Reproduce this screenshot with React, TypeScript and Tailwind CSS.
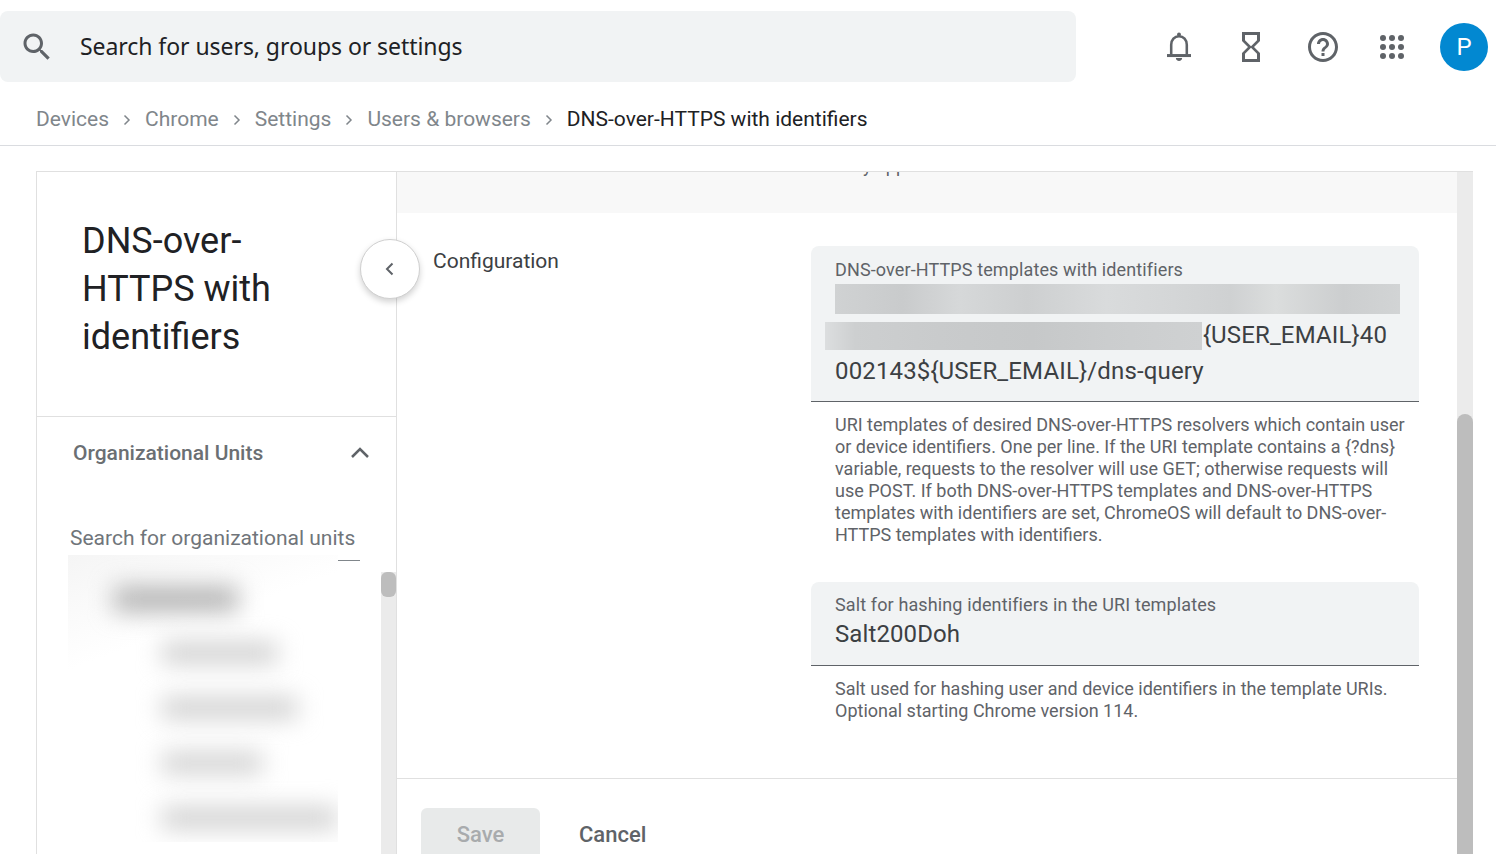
import React from 'react';

const ICON = '#5f6368';

function MatIcon({ d, size = 36 }: { d: string; size?: number }) {
  return (
    <svg width={size} height={size} viewBox="0 0 24 24" fill={ICON}>
      <path d={d} />
    </svg>
  );
}

function Crumb({ label }: { label: string }) {
  return (
    <>
      <span className="text-[#80868b]">{label}</span>
      <svg width="24" height="24" viewBox="0 0 24 24" fill="none" stroke="#80868b" strokeWidth="1.5" className="mx-[6px]">
        <path d="M9.5 7.5l4.5 4.5-4.5 4.5" />
      </svg>
    </>
  );
}

function BlurLine({ width, tone }: { width: string; tone: string }) {
  return <div className={`h-[20px] blur-[12px] ${width} ${tone}`} />;
}

export default function App() {
  return (
    <div className="h-[854px] overflow-hidden bg-white font-['Roboto',sans-serif] text-[#3c4043]">
      {/* Top bar */}
      <header className="flex h-[82px] items-start">
        <div className="mt-[11px] flex h-[71px] w-[1076px] items-center rounded-lg bg-[#f1f3f4] pl-[19px]">
          <MatIcon d="M15.5 14h-.79l-.28-.27C15.41 12.59 16 11.11 16 9.5 16 5.91 13.09 3 9.5 3S3 5.91 3 9.5 5.91 16 9.5 16c1.61 0 3.09-.59 4.23-1.57l.27.28v.79l5 4.99L20.49 19l-4.99-5zm-6 0C7.01 14 5 11.99 5 9.5S7.01 5 9.5 5 14 7.01 14 9.5 11.99 14 9.5 14z" />
          <span className="ml-[25px] font-['Noto_Sans',sans-serif] text-[23px] tracking-[-0.06px] text-[#202124]">Search for users, groups or settings</span>
        </div>
        <div className="ml-[67px] mt-[11px] flex h-[71px] items-center">
          <div className="flex w-[72px] justify-center">
            <svg width="36" height="36" viewBox="0 0 24 24" fill={ICON}>
              <circle cx="12" cy="3.600" r="1.300" />
              <path d="M6.800 17v-6.500c0-3.300 2.200-5.700 5.200-5.700s5.200 2.400 5.200 5.700V17" fill="none" stroke={ICON} strokeWidth="1.700" />
              <rect x="4" y="16.700" width="16" height="2" />
              <path d="M9.900 19.400h4.200c0 1.200-.9 1.900-2.100 1.900s-2.100-.7-2.100-1.900z" />
            </svg>
          </div>
          <div className="flex w-[72px] justify-center">
            <MatIcon d="M6 2v6h.01L6 8.01 10 12l-4 4 .01.01H6V22h12v-5.99h-.01L18 16l-4-4 4-3.99-.01-.01H18V2H6zm10 14.500V20H8v-3.500l4-4 4 4zm-4-5l-4-4V4h8v3.500l-4 4z" />
          </div>
          <div className="flex w-[72px] justify-center">
            <MatIcon d="M11 18h2v-2h-2v2zm1-16C6.480 2 2 6.480 2 12s4.480 10 10 10 10-4.480 10-10S17.520 2 12 2zm0 18c-4.410 0-8-3.590-8-8s3.590-8 8-8 8 3.590 8 8-3.590 8-8 8zm0-14c-2.210 0-4 1.790-4 4h2c0-1.100.9-2 2-2s2 .9 2 2c0 2-3 1.750-3 5h2c0-2.250 3-2.500 3-5 0-2.210-1.790-4-4-4z" />
          </div>
          <div className="flex w-[66px] justify-center">
            <svg width="26" height="26" viewBox="0 0 26 26" fill={ICON}>
              {[4, 13, 22].map((y) =>
                [4, 13, 22].map((x) => <circle key={`${x}-${y}`} cx={x} cy={y} r="3" />)
              )}
            </svg>
          </div>
          <div className="ml-[15px] flex h-[48px] w-[48px] items-center justify-center rounded-full bg-[#0288d1] text-[24px] text-white">P</div>
        </div>
      </header>

      {/* Breadcrumb */}
      <nav className="flex h-[64px] items-center border-b border-[#dadce0] pl-[36px] pt-[12px] text-[21px]">
        <Crumb label="Devices" />
        <Crumb label="Chrome" />
        <Crumb label="Settings" />
        <Crumb label="Users & browsers" />
        <span className="text-[#202124]">DNS-over-HTTPS with identifiers</span>
      </nav>

      {/* Panels */}
      <div className="relative ml-[36px] mt-[25px] flex h-[700px] w-[1437px] border-l border-t border-[#e0e0e0]">
        <aside className="flex w-[360px] shrink-0 flex-col border-r border-[#e0e0e0]">
          <div className="h-[245px] shrink-0 border-b border-[#e0e0e0] pl-[45px] pt-[45px] text-[36px] leading-[48px] text-[#202124]">
            DNS-over-<br />HTTPS with<br />identifiers
          </div>
          <div className="flex h-[73px] shrink-0 items-center justify-between pl-[36px] pr-[25px] text-[21px] font-medium text-[#6b6f73]">
            <span>Organizational Units</span>
            <svg width="22" height="14" viewBox="0 0 22 14" fill="none" stroke={ICON} strokeWidth="2.500" className="-mt-[2px]">
              <path d="M3 11l8-8 8 8" />
            </svg>
          </div>
          <div className="mt-[33px] ml-[31px] mr-[36px] h-[38px] shrink-0 border-b border-[#80868b] pl-[2px] text-[21px] text-[#70757a]">
            Search for organizational units
          </div>
          <div className="flex flex-1 justify-between">
            <div className="relative -mt-[6px] ml-[31px] h-[287px] w-[270px] overflow-hidden bg-[linear-gradient(160deg,#f5f5f5,#ffffff_30%)]">
              <div className="mb-[32px] ml-[46px] mt-[32px] h-[24px] w-[124px] bg-[#b0b0b0] blur-[12px]" />
              <div className="flex flex-col gap-[35px] pl-[94px]">
                <BlurLine width="w-[115px]" tone="bg-[#cccccc]" />
                <BlurLine width="w-[135px]" tone="bg-[#cccccc]" />
                <BlurLine width="w-[100px]" tone="bg-[#cecece]" />
                <BlurLine width="w-[175px]" tone="bg-[#cccccc]" />
              </div>
            </div>
            <div className="mt-[11px] w-[15px] shrink-0 bg-[#ebebeb]">
              <div className="h-[25px] rounded-[6px] bg-[#bdbdbd]" />
            </div>
          </div>
        </aside>

        {/* Collapse button sits over the panel edge */}
        <button className="absolute left-[323px] top-[67px] flex h-[60px] w-[60px] items-center justify-center rounded-full border border-[#d0d0d0] bg-white shadow-[0_3px_6px_rgba(0,0,0,0.18)]">
          <svg width="24" height="24" viewBox="0 0 24 24" fill="none" stroke={ICON} strokeWidth="2">
            <path d="M14.500 6.500L9 12l5.500 5.500" />
          </svg>
        </button>

        <main className="flex min-w-0 flex-1 flex-col">
          <div className="h-[41px] shrink-0 overflow-hidden bg-[#f8f8f8] pl-[456px] text-[18px] leading-[22px] text-[#5f6368]">
            <div className="-mt-[17px]">by apps</div>
          </div>
          <div className="flex h-[566px] shrink-0 border-b border-[#e0e0e0]">
            <div className="w-[414px] shrink-0 pl-[36px] pt-[34px] text-[21px] leading-[28px]">Configuration</div>
            <div className="w-[608px] pt-[33px]">
              <div className="h-[156px] rounded-t-lg border-b border-[#5f6368] bg-[#f1f3f4] pt-[13px]">
                <div className="pl-[24px] text-[18px] leading-[22px] tracking-[0.12px] text-[#5f6368]">DNS-over-HTTPS templates with identifiers</div>
                <div className="ml-[24px] mt-[3px] h-[30px] w-[565px] bg-[linear-gradient(90deg,#d0d2d3,#c9cbcc_12%,#d6d8d9_22%,#cdcfd0_34%,#d9dbdc_48%,#d4d6d7_60%,#cfd1d2_70%,#dbdddd_78%,#cccecf_90%,#d2d4d5)]" />
                <div className="mt-[8px] flex h-[28px] items-center text-[24px] tracking-[0.15px]">
                  <div className="ml-[14px] h-[28px] w-[377px] bg-[linear-gradient(90deg,#dcdedf,#cdcfd0_8%,#c9cbcc_30%,#c6c8c9_55%,#cbcdce_75%,#cfd1d2)]" />
                  <span className="-mt-[2px] ml-px">{'{USER_EMAIL}40'}</span>
                </div>
                <div className="mt-[3px] pl-[24px] text-[24px] leading-[36px] tracking-[0.15px]">{'002143${USER_EMAIL}/dns-query'}</div>
              </div>
              <p className="whitespace-nowrap pl-[24px] pt-[12px] text-[18px] leading-[22px] text-[#5f6368]">
                URI templates of desired DNS-over-HTTPS resolvers which contain user<br />
                or device identifiers. One per line. If the URI template contains a {'{?dns}'}<br />
                variable, requests to the resolver will use GET; otherwise requests will<br />
                use POST. If both DNS-over-HTTPS templates and DNS-over-HTTPS<br />
                templates with identifiers are set, ChromeOS will default to DNS-over-<br />
                HTTPS templates with identifiers.
              </p>
              <div className="mt-[36px] h-[84px] rounded-t-lg border-b border-[#5f6368] bg-[#f1f3f4] pl-[24px] pt-[12px]">
                <div className="text-[18px] leading-[22px] tracking-[0.12px] text-[#5f6368]">Salt for hashing identifiers in the URI templates</div>
                <div className="mt-[2px] text-[24px] leading-[32px] tracking-[0.1px]">Salt200Doh</div>
              </div>
              <p className="whitespace-nowrap pl-[24px] pt-[12px] text-[18px] leading-[22px] text-[#5f6368]">
                Salt used for hashing user and device identifiers in the template URIs.<br />
                Optional starting Chrome version 114.
              </p>
            </div>
          </div>
          <div className="flex items-start pl-[24px] pt-[29px] text-[22px] font-medium">
            <div className="flex h-[60px] w-[119px] items-center justify-center rounded-t-md bg-[#e8eaea] pb-[8px] text-[#a8abad]">Save</div>
            <span className="ml-[39px] mt-[10px] text-[#5f6368]">Cancel</span>
          </div>
        </main>

        <div className="w-[16px] shrink-0 bg-[#ebebeb] pt-[242px]">
          <div className="h-full rounded-t-lg bg-[#bdbdbd]" />
        </div>
      </div>
    </div>
  );
}
